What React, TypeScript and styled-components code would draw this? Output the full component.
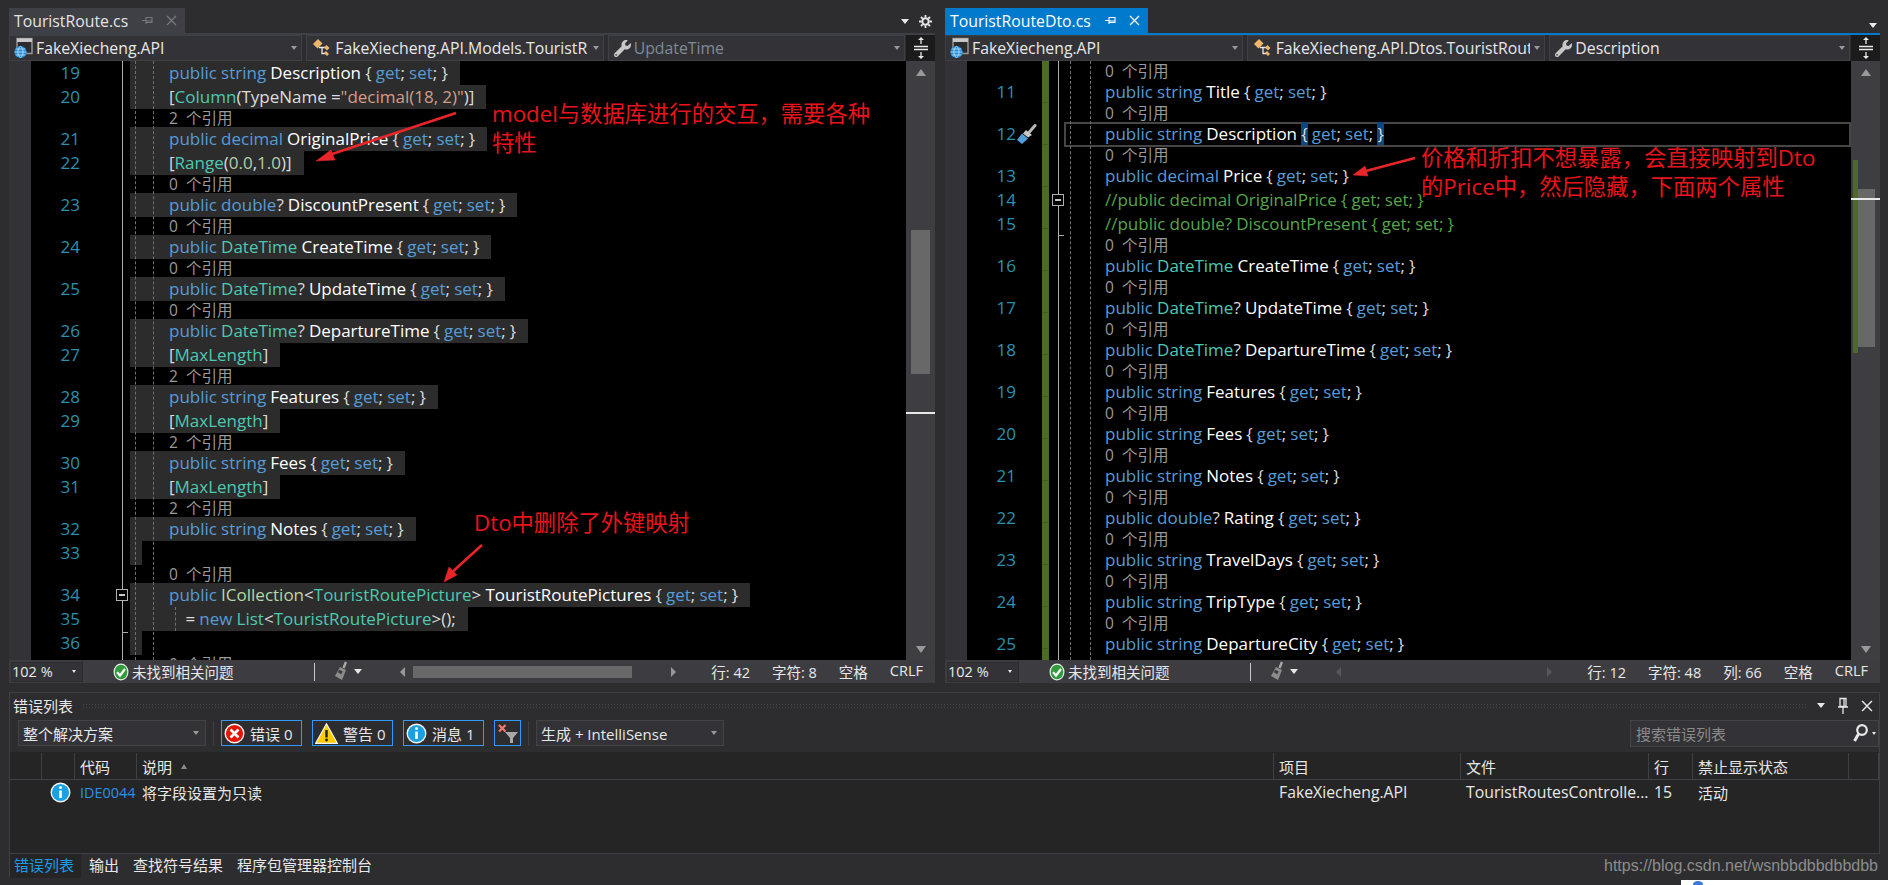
import React from 'react';
import styled, { createGlobalStyle } from 'styled-components';
import { FaWrench } from 'react-icons/fa';

const GlobalStyle = createGlobalStyle`
  html, body {
    margin: 0;
    padding: 0;
    background: #2d2d30;
  }
  * {
    box-sizing: border-box;
  }
`;

const FONT = `"Open Sans", "Noto Sans CJK SC", sans-serif`;

const Page = styled.div`
  position: relative;
  width: 1888px;
  height: 885px;
  overflow: hidden;
  background: #2d2d30;
  color: #e8e8e8;
  font-family: ${FONT};
  font-size: 15px;
`;

const Panes = styled.div`
  display: grid;
  grid-template-columns: 926px 935px;
  column-gap: 10px;
  padding-left: 9px;
`;

const Pane = styled.section`
  display: flex;
  flex-direction: column;
`;

const TabStrip = styled.div<{ $active?: boolean }>`
  display: flex;
  align-items: flex-end;
  height: 35px;
  border-bottom: 2px solid ${(p) => (p.$active ? '#007acc' : '#3f3f46')};
`;

const Tab = styled.div<{ $active?: boolean; $width: number }>`
  display: flex;
  align-items: center;
  width: ${(p) => p.$width}px;
  height: 25px;
  padding-left: 5px;
  background: ${(p) => (p.$active ? '#007acc' : '#3f3f46')};
  color: ${(p) => (p.$active ? '#ffffff' : '#e4e4e4')};
  font-size: 15.8px;
  white-space: nowrap;
`;

const TabActions = styled.div`
  display: flex;
  align-items: center;
  gap: 10px;
  margin-left: auto;
  margin-bottom: 5px;
  padding-right: 3px;
  color: #e8e8e8;
`;

const TabIcons = styled.span<{ $dim?: boolean }>`
  display: inline-flex;
  align-items: center;
  gap: 13px;
  margin-left: auto;
  color: ${(p) => (p.$dim ? '#77777c' : '#ffffff')};
  padding-right: 8px;
`;

const NavBar = styled.div`
  display: flex;
  height: 26px;
  background: #2d2d30;
`;

const NavDrop = styled.div<{ $width: number; $dim?: boolean }>`
  display: flex;
  align-items: center;
  width: ${(p) => p.$width}px;
  margin-right: 4px;
  padding: 0 4px 0 3px;
  background: #333337;
  border: 1px solid #3f3f46;
  color: ${(p) => (p.$dim ? '#7f8a96' : '#e8e8e8')};
  font-size: 15.8px;
  white-space: nowrap;
  overflow: hidden;
`;

const NavLabel = styled.span`
  flex: 1;
  margin-left: 3px;
  overflow: hidden;
`;

const Caret = styled.span`
  flex: none;
  width: 0;
  height: 0;
  border-left: 3.5px solid transparent;
  border-right: 3.5px solid transparent;
  border-top: 4px solid #999;
  margin-left: 4px;
`;

const SplitButton = styled.div`
  flex: none;
  display: flex;
  align-items: center;
  justify-content: center;
  width: 29px;
  margin-left: -3px;
  background: #1b1b1c;
`;

const Editor = styled.div`
  position: relative;
  display: flex;
  height: 599px;
  overflow: hidden;
  background: #000;
`;

const LeftMargin = styled.div`
  flex: none;
  width: 22px;
  background: #333337;
`;

const Lines = styled.div<{ $offset?: number }>`
  flex: 1;
  min-width: 0;
  padding-top: ${(p) => p.$offset ?? 0}px;
`;

const Row = styled.div<{ $lens?: boolean }>`
  display: flex;
  height: ${(p) => (p.$lens ? 18 : 24)}px;
  line-height: ${(p) => (p.$lens ? 18 : 24)}px;
  white-space: pre;
`;

const LineNumber = styled.div`
  flex: none;
  width: 49px;
  text-align: right;
  color: #2b91af;
  font-size: 17px;
`;

const Fold = styled.div<{ $width: number }>`
  flex: none;
  width: ${(p) => p.$width}px;
  display: flex;
  align-items: center;
`;

const CodeCell = styled.div<{ $current?: boolean }>`
  flex: 1;
  min-width: 0;
  height: ${(p) => (p.$current ? 25 : 24)}px;
  box-shadow: ${(p) => (p.$current ? 'inset 0 0 0 2px #464646' : 'none')};
`;

const Code = styled.div<{ $pad: number; $selected?: boolean }>`
  display: inline-block;
  vertical-align: top;
  height: 24px;
  padding-left: ${(p) => p.$pad}px;
  padding-right: ${(p) => (p.$selected ? 12 : 0)}px;
  background: ${(p) => (p.$selected ? '#2c2c2d' : 'transparent')};
  font-size: 17px;
  word-spacing: -0.3px;
  color: #dcdcdc;
`;

const EmptySelection = styled.div`
  width: 12px;
  height: 24px;
  background: #2c2c2d;
`;

const Lens = styled.div<{ $pad: number }>`
  padding-left: ${(p) => p.$pad}px;
  color: #9a9a9a;
  font-size: 15.5px;
`;

const TOKEN_COLORS: Record<string, string> = {
  k: '#569cd6',
  t: '#4ec9b0',
  i: '#b8d7a3',
  p: '#dcdcdc',
  w: '#ffffff',
  s: '#d69d85',
  n: '#b5cea8',
  c: '#57a64a',
  b: '#569cd6',
};

const Token = styled.span<{ $kind: string }>`
  color: ${(p) => TOKEN_COLORS[p.$kind]};
  ${(p) => (p.$kind === 'b' ? 'background: #0e4583; color: #dcdcdc;' : '')}
`;

const Rule = styled.div<{ $left: number; $dashed?: boolean; $from?: number; $size?: number; $color?: string }>`
  position: absolute;
  left: ${(p) => p.$left}px;
  top: ${(p) => p.$from ?? 0}px;
  ${(p) => (p.$size ? `height: ${p.$size}px;` : 'bottom: 0;')}
  width: 0;
  border-left: 1px ${(p) => (p.$dashed ? 'dashed' : 'solid')} ${(p) => p.$color ?? '#5c5c5c'};
`;

const GreenBar = styled.div`
  position: absolute;
  left: 97px;
  top: 0;
  bottom: 0;
  width: 7px;
  background: repeating-linear-gradient(
    to bottom,
    #4d6b22 0,
    #4d6b22 41px,
    #435e1e 41px,
    #435e1e 42px
  );
`;

const FoldBox = styled.div<{ $left: number; $top: number }>`
  position: absolute;
  left: ${(p) => p.$left}px;
  top: ${(p) => p.$top}px;
  width: 12px;
  height: 12px;
  background: #000;
  border: 1px solid #b0b0b0;
  &::after {
    content: '';
    position: absolute;
    left: 2px;
    right: 2px;
    top: 4px;
    height: 2px;
    background: #c8c8c8;
  }
`;

const FoldTick = styled.div<{ $left: number; $top: number }>`
  position: absolute;
  left: ${(p) => p.$left}px;
  top: ${(p) => p.$top}px;
  width: 6px;
  height: 1px;
  background: #aaa;
`;

const VScroll = styled.div`
  position: relative;
  flex: none;
  width: 29px;
  display: flex;
  flex-direction: column;
  align-items: center;
  background: #3e3e42;
`;

const ArrowBox = styled.div`
  flex: none;
  height: 22px;
  width: 100%;
  display: flex;
  align-items: center;
  justify-content: center;
`;

const ArrowUp = styled.span`
  width: 0;
  height: 0;
  border-left: 5px solid transparent;
  border-right: 5px solid transparent;
  border-bottom: 7px solid #999;
`;

const ArrowDown = styled(ArrowUp)`
  border-bottom: 0;
  border-top: 7px solid #999;
`;

const Thumb = styled.div<{ $top: number; $height: number }>`
  flex: none;
  width: 19px;
  height: ${(p) => p.$height}px;
  margin-top: ${(p) => p.$top}px;
  margin-bottom: auto;
  background: #686868;
`;

const ScrollMark = styled.div<{ $top: number }>`
  position: absolute;
  left: 0;
  right: 0;
  top: ${(p) => p.$top}px;
  height: 2px;
  background: #e8e8e8;
`;

const ScrollChange = styled.div`
  position: absolute;
  left: 2px;
  width: 5px;
  top: 99px;
  height: 193px;
  background: #4d6b22;
`;

const StatusBar = styled.div`
  display: flex;
  align-items: center;
  height: 23px;
  background: #3c3c41;
  white-space: nowrap;
  font-size: 14.5px;
`;

const ZoomDrop = styled.div`
  display: flex;
  align-items: center;
  justify-content: space-between;
  width: 72px;
  height: 20px;
  margin-left: 2px;
  padding: 0 6px 0 0;
  background: #333337;
  border: 1px solid #2d2d30;
`;

const SmallCaret = styled.span`
  width: 0;
  height: 0;
  border-left: 2.5px solid transparent;
  border-right: 2.5px solid transparent;
  border-top: 3px solid #e8e8e8;
`;

const Health = styled.div`
  display: flex;
  align-items: center;
  gap: 3px;
  margin-left: 30px;
  width: 201px;
`;

const Separator = styled.div`
  flex: none;
  width: 1px;
  height: 18px;
  background: #c8c8c8;
`;

const CleanButton = styled.div`
  display: flex;
  align-items: center;
  gap: 4px;
  margin-left: 18px;
  width: 67px;
`;

const WhiteCaret = styled.span`
  width: 0;
  height: 0;
  border-left: 4px solid transparent;
  border-right: 4px solid transparent;
  border-top: 5px solid #e8e8e8;
`;

const HScroll = styled.div<{ $width: number }>`
  flex: none;
  display: flex;
  align-items: center;
  width: ${(p) => p.$width}px;
  height: 12px;
`;

const HArrow = styled.span<{ $right?: boolean; $dim?: boolean }>`
  flex: none;
  width: 0;
  height: 0;
  border-top: 5.5px solid transparent;
  border-bottom: 5.5px solid transparent;
  ${(p) =>
    p.$right
      ? `border-left: 5px solid ${p.$dim ? '#55555a' : '#999'}; margin-left: auto;`
      : `border-right: 5px solid ${p.$dim ? '#55555a' : '#999'};`}
`;

const HThumb = styled.div`
  width: 219px;
  height: 12px;
  margin-left: 8px;
  background: #686868;
`;

const StatusRight = styled.div`
  display: flex;
  gap: 22px;
  margin-left: auto;
  padding-right: 12px;
`;

const Panel = styled.section`
  display: flex;
  flex-direction: column;
  height: 185px;
  margin: 9px 8px 0 9px;
  border-top: 1px solid #3f3f46;
  border-left: 1px solid #3f3f46;
  border-right: 1px solid #3f3f46;
`;

const PanelTitle = styled.div`
  display: flex;
  align-items: center;
  height: 25px;
  padding: 0 6px 0 3px;
`;

const Grip = styled.div`
  flex: 1;
  height: 6px;
  margin: 0 9px;
  background-image: radial-gradient(#46464a 1px, transparent 1px);
  background-size: 3px 3px;
`;

const PanelIcons = styled.div`
  display: flex;
  align-items: center;
  gap: 12px;
`;

const Toolbar = styled.div`
  display: flex;
  align-items: center;
  height: 34px;
  padding: 0 0 4px 8px;
`;

const Drop = styled.div<{ $width: number }>`
  display: flex;
  align-items: center;
  justify-content: space-between;
  width: ${(p) => p.$width}px;
  height: 26px;
  padding: 0 6px 0 4px;
  background: #333337;
  border: 1px solid #434346;
`;

const ToolSep = styled.div`
  width: 1px;
  height: 24px;
  margin: 0 7px;
  background: #3f3f46;
`;

const ToggleButton = styled.div<{ $width: number }>`
  display: flex;
  align-items: center;
  gap: 5px;
  width: ${(p) => p.$width}px;
  height: 26px;
  padding-left: 2px;
  border: 1px solid #3399ff;
  margin-right: 10px;
`;

const FilterButton = styled(ToggleButton)`
  margin-right: 0;
  justify-content: center;
  padding-left: 0;
`;

const SearchBox = styled.div`
  display: flex;
  align-items: center;
  width: 249px;
  height: 27px;
  margin-left: auto;
  padding-left: 5px;
  background: #333337;
  border: 1px solid #434346;
  color: #8a8a8a;
`;

const SearchButton = styled.div`
  display: flex;
  align-items: center;
  gap: 3px;
  margin-left: auto;
  height: 100%;
  padding: 0 2px 0 0;
`;

const TableArea = styled.div`
  flex: 1;
  min-height: 0;
  background: #252526;
`;

const TABLE_COLUMNS = '32px 33px 62px 1137px 187px 188px 44px 156px 1fr';

const TableHead = styled.div`
  display: grid;
  grid-template-columns: ${TABLE_COLUMNS};
  height: 27px;
  margin-top: 1px;
  border-bottom: 1px solid #3f3f46;
`;

const TableRow = styled.div`
  display: grid;
  grid-template-columns: ${TABLE_COLUMNS};
  height: 21px;
  margin-top: 1px;
`;

const HeadCell = styled.div`
  display: flex;
  align-items: center;
  gap: 9px;
  padding-left: 5px;
  border-right: 1px solid #3f3f46;
  white-space: nowrap;
`;

const SortMark = styled.span`
  width: 0;
  height: 0;
  border-left: 3.5px solid transparent;
  border-right: 3.5px solid transparent;
  border-bottom: 5px solid #8a8a8a;
`;

const Cell = styled.div<{ $link?: boolean; $latin?: boolean; $icon?: boolean }>`
  display: flex;
  align-items: center;
  padding-left: ${(p) => (p.$icon ? 8 : 5)}px;
  color: ${(p) => (p.$link ? '#2b91ea' : '#e8e8e8')};
  font-size: ${(p) => (p.$latin ? 15.8 : p.$link ? 14.4 : 15)}px;
  white-space: nowrap;
`;

const BottomTabs = styled.div`
  display: flex;
  align-items: flex-start;
  height: 24px;
  margin-right: -1px;
  border-top: 1px solid #3f3f46;
  background: #2d2d30;
`;

const BottomTab = styled.div<{ $active?: boolean }>`
  height: 24px;
  line-height: 22px;
  padding: 0 7px 0 ${(p) => (p.$active ? 4 : 7)}px;
  margin-right: ${(p) => (p.$active ? 1 : 0)}px;
  background: ${(p) => (p.$active ? '#252526' : 'transparent')};
  color: ${(p) => (p.$active ? '#1b9bf0' : '#e8e8e8')};
`;

const Watermark = styled.div`
  margin-left: auto;
  padding-right: 2px;
  line-height: 24px;
  font-family: 'Liberation Sans', sans-serif;
  font-size: 16px;
  color: #8c8c8c;
`;

const Note = styled.div<{ $left: number; $top: number }>`
  position: absolute;
  left: ${(p) => p.$left}px;
  top: ${(p) => p.$top}px;
  color: #e8141c;
  font-size: 22.3px;
  line-height: 29px;
  white-space: pre;
`;

const ArrowOverlay = styled.svg`
  position: absolute;
  left: 0;
  top: 0;
  pointer-events: none;
`;

const CornerWindow = styled.div`
  position: absolute;
  left: 1681px;
  top: 880px;
  width: 207px;
  height: 5px;
  background: #fff;
  &::after {
    content: '';
    position: absolute;
    left: 12px;
    top: 1px;
    width: 10px;
    height: 6px;
    border-radius: 50%;
    background: #3b78d8;
  }
`;

// icons ---------------------------------------------------------------------

const ProjectIcon = () => (
  <svg width="20" height="22" viewBox="0 0 20 22" style={{ flex: 'none' }}>
    <rect x="4" y="1.5" width="15" height="15" fill="#2d2d30" stroke="#9a9a9a" strokeWidth="1.4" />
    <rect x="4" y="1.5" width="15" height="3.5" fill="#c8c8c8" />
    <circle cx="7.5" cy="15" r="6" fill="#1e8fe0" />
    <path
      d="M1.5 15h12M7.5 9c-3.4 3.6-3.4 8.4 0 12M7.5 9c3.4 3.6 3.4 8.4 0 12M2.6 12h9.8M2.6 18h9.8"
      fill="none"
      stroke="#bfe3fb"
      strokeWidth="0.8"
    />
  </svg>
);

const NamespaceIcon = () => (
  <svg width="20" height="20" viewBox="0 0 20 20" style={{ flex: 'none', marginLeft: 2 }}>
    <path d="M1 6l5-5 4.5 4.5-5 5z" fill="#f0b76a" />
    <path d="M7 9.5h6M10 9.5v6h3" fill="none" stroke="#e8e8e8" strokeWidth="1.3" />
    <path d="M12 9.5l2.5-2.5 3 3-2.5 2.5zM12 15l2-2 3 3-2 2z" fill="#f0b76a" />
  </svg>
);

const SplitIcon = () => (
  <svg width="16" height="22" viewBox="0 0 16 22">
    <path d="M1 9.5h14M1 12.5h14M8 1v6M8 15v6" stroke="#e8e8e8" strokeWidth="1.3" fill="none" />
    <path d="M5 3l3-3 3 3zM5 19l3 3 3-3z" fill="#e8e8e8" />
  </svg>
);

const PinIcon = ({ color = '#fff' }: { color?: string }) => (
  <svg width="11" height="11" viewBox="0 0 11 11">
    <path d="M0 5.5h4M4 2v7M4 2.5h6v5H4M4 6h6" fill="none" stroke={color} strokeWidth="1.1" />
  </svg>
);

const VPinIcon = () => (
  <svg width="12" height="18" viewBox="0 0 12 18">
    <path d="M3 1.5h6v8H3zM7 1.5v8M1 10h10M6 10v7" fill="none" stroke="#e8e8e8" strokeWidth="1.3" />
  </svg>
);

const CloseIcon = ({ color = '#fff', size = 11 }: { color?: string; size?: number }) => (
  <svg width={size} height={size} viewBox="0 0 11 11">
    <path d="M1 1l9 9M10 1l-9 9" stroke={color} strokeWidth="1.3" fill="none" />
  </svg>
);

const GearIcon = () => (
  <svg width="13" height="13" viewBox="0 0 13 13">
    <circle cx="6.5" cy="6.5" r="3.2" fill="none" stroke="#e8e8e8" strokeWidth="2" />
    <path
      d="M6.5 0v2.5M6.5 10.5V13M0 6.5h2.5M10.5 6.5H13M2 2l1.7 1.7M9.3 9.3L11 11M11 2L9.3 3.7M3.7 9.3L2 11"
      stroke="#e8e8e8"
      strokeWidth="1.8"
    />
  </svg>
);

const OkIcon = () => (
  <svg width="16" height="18" viewBox="0 0 16 18" style={{ flex: 'none' }}>
    <ellipse cx="8" cy="9" rx="7.5" ry="8.5" fill="#e8efe8" />
    <ellipse cx="8" cy="9" rx="6.3" ry="7.3" fill="#339a3e" />
    <path d="M4 9.2l3 3.3 5-6.5" fill="none" stroke="#fff" strokeWidth="2.2" />
  </svg>
);

const BroomIcon = () => (
  <svg width="17" height="22" viewBox="0 0 17 22" style={{ flex: 'none' }}>
    <path d="M13 1l-2.5 6" stroke="#a8a8a8" strokeWidth="2.4" />
    <path d="M7 6l6 3-4 10-7-4z" fill="#8c8c8c" />
    <path d="M5.5 10l3.5 1.8" stroke="#3c3c41" strokeWidth="3" />
  </svg>
);

const BrushMark = () => (
  <svg width="21" height="22" viewBox="0 0 21 22">
    <path d="M19 2.5l-6 7" stroke="#b8b8b8" strokeWidth="3" strokeLinecap="round" />
    <path d="M10 7l6 5-4 2.5-5-4z" fill="#c8c8c8" />
    <path d="M6 10.5l6 5-6 5.5-5-4z" fill="#4f9fdc" />
  </svg>
);

const ErrorIcon = () => (
  <svg width="21" height="21" viewBox="0 0 21 21" style={{ flex: 'none' }}>
    <circle cx="10.5" cy="10.5" r="10" fill="#f4f4f4" />
    <circle cx="10.5" cy="10.5" r="8.6" fill="#e51400" />
    <path d="M6.5 6.5l8 8M14.5 6.5l-8 8" stroke="#fff" strokeWidth="2.6" />
  </svg>
);

const WarnIcon = () => (
  <svg width="23" height="21" viewBox="0 0 23 21" style={{ flex: 'none' }}>
    <path d="M11.5 .8L22.4 20.4H.6z" fill="#ffcc00" stroke="#f4f4f4" strokeWidth="1.2" />
    <path d="M11.5 7v7.5" stroke="#1e1e1e" strokeWidth="2.4" />
    <circle cx="11.5" cy="17" r="1.4" fill="#1e1e1e" />
  </svg>
);

const InfoIcon = () => (
  <svg width="21" height="21" viewBox="0 0 21 21" style={{ flex: 'none' }}>
    <circle cx="10.5" cy="10.5" r="10" fill="#f4f4f4" />
    <circle cx="10.5" cy="10.5" r="8.6" fill="#1ba1e2" />
    <path d="M10.5 8.5v7.5" stroke="#fff" strokeWidth="2.6" />
    <circle cx="10.5" cy="5.6" r="1.5" fill="#fff" />
  </svg>
);

const FilterIcon = () => (
  <svg width="24" height="22" viewBox="0 0 24 22">
    <path d="M3 3l6.5 6.5M9.5 3L3 9.5" stroke="#f0796a" strokeWidth="2.2" />
    <path d="M9 10h13l-5 6v5h-3v-5z" fill="#a8a8a8" />
  </svg>
);

const SearchIcon = () => (
  <svg width="18" height="20" viewBox="0 0 18 20">
    <circle cx="11" cy="7" r="4.8" fill="none" stroke="#e8e8e8" strokeWidth="2.2" />
    <path d="M7.5 11L3.5 18" stroke="#e8e8e8" strokeWidth="3" />
  </svg>
);

// code ----------------------------------------------------------------------

type Tok = [string, string];

interface Line {
  n?: number;
  toks?: Tok[];
  lens?: string;
}

const accessors: Tok[] = [
  ['p', '{ '],
  ['k', 'get'],
  ['p', '; '],
  ['k', 'set'],
  ['p', '; }'],
];

const prop = (type: Tok[], name: string): Tok[] => [
  ['k', 'public '],
  ...type,
  ['w', `${name} `],
  ...accessors,
];

const str: Tok[] = [['k', 'string ']];
const dec: Tok[] = [['k', 'decimal ']];
const dbl: Tok[] = [
  ['k', 'double'],
  ['p', '? '],
];
const date: Tok[] = [
  ['t', 'DateTime'],
  ['p', ' '],
];
const dateQ: Tok[] = [
  ['t', 'DateTime'],
  ['p', '? '],
];
const maxLength: Tok[] = [
  ['p', '['],
  ['t', 'MaxLength'],
  ['p', ']'],
];

const leftLines: Line[] = [
  { n: 19, toks: prop(str, 'Description') },
  {
    n: 20,
    toks: [
      ['p', '['],
      ['t', 'Column'],
      ['p', '(TypeName ='],
      ['s', '"decimal(18, 2)"'],
      ['p', ')]'],
    ],
  },
  { lens: '2' },
  { n: 21, toks: prop(dec, 'OriginalPrice') },
  {
    n: 22,
    toks: [
      ['p', '['],
      ['t', 'Range'],
      ['p', '('],
      ['n', '0.0'],
      ['p', ','],
      ['n', '1.0'],
      ['p', ')]'],
    ],
  },
  { lens: '0' },
  { n: 23, toks: prop(dbl, 'DiscountPresent') },
  { lens: '0' },
  { n: 24, toks: prop(date, 'CreateTime') },
  { lens: '0' },
  { n: 25, toks: prop(dateQ, 'UpdateTime') },
  { lens: '0' },
  { n: 26, toks: prop(dateQ, 'DepartureTime') },
  { n: 27, toks: maxLength },
  { lens: '2' },
  { n: 28, toks: prop(str, 'Features') },
  { n: 29, toks: maxLength },
  { lens: '2' },
  { n: 30, toks: prop(str, 'Fees') },
  { n: 31, toks: maxLength },
  { lens: '2' },
  { n: 32, toks: prop(str, 'Notes') },
  { n: 33, toks: [] },
  { lens: '0' },
  {
    n: 34,
    toks: [
      ['k', 'public '],
      ['i', 'ICollection'],
      ['p', '<'],
      ['t', 'TouristRoutePicture'],
      ['p', '> '],
      ['w', 'TouristRoutePictures '],
      ...accessors,
    ],
  },
  {
    n: 35,
    toks: [
      ['p', '    = '],
      ['k', 'new '],
      ['t', 'List'],
      ['p', '<'],
      ['t', 'TouristRoutePicture'],
      ['p', '>();'],
    ],
  },
  { n: 36, toks: [] },
  { lens: '0' },
];

const rightLines: Line[] = [
  { lens: '0' },
  { n: 11, toks: prop(str, 'Title') },
  { lens: '0' },
  {
    n: 12,
    toks: [
      ['k', 'public '],
      ['k', 'string '],
      ['w', 'Description '],
      ['b', '{'],
      ['p', ' '],
      ['k', 'get'],
      ['p', '; '],
      ['k', 'set'],
      ['p', '; '],
      ['b', '}'],
    ],
  },
  { lens: '0' },
  { n: 13, toks: prop(dec, 'Price') },
  { n: 14, toks: [['c', '//public decimal OriginalPrice { get; set; }']] },
  { n: 15, toks: [['c', '//public double? DiscountPresent { get; set; }']] },
  { lens: '0' },
  { n: 16, toks: prop(date, 'CreateTime') },
  { lens: '0' },
  { n: 17, toks: prop(dateQ, 'UpdateTime') },
  { lens: '0' },
  { n: 18, toks: prop(dateQ, 'DepartureTime') },
  { lens: '0' },
  { n: 19, toks: prop(str, 'Features') },
  { lens: '0' },
  { n: 20, toks: prop(str, 'Fees') },
  { lens: '0' },
  { n: 21, toks: prop(str, 'Notes') },
  { lens: '0' },
  { n: 22, toks: prop(dbl, 'Rating') },
  { lens: '0' },
  { n: 23, toks: prop(str, 'TravelDays') },
  { lens: '0' },
  { n: 24, toks: prop(str, 'TripType') },
  { lens: '0' },
  { n: 25, toks: prop(str, 'DepartureCity') },
];

interface CodeLinesProps {
  lines: Line[];
  foldWidth: number;
  pad: number;
  selected?: boolean;
  currentLine?: number;
}

const CodeLines: React.FC<CodeLinesProps> = ({ lines, foldWidth, pad, selected, currentLine }) => (
  <>
    {lines.map((line, i) =>
      line.lens ? (
        <Row key={i} $lens>
          <LineNumber />
          <Fold $width={foldWidth} />
          <Lens $pad={pad}>{`${line.lens}  个引用`}</Lens>
        </Row>
      ) : (
        <Row key={i}>
          <LineNumber>{line.n}</LineNumber>
          <Fold $width={foldWidth}>{line.n === currentLine && <BrushMark />}</Fold>
          <CodeCell $current={line.n === currentLine}>
            {line.toks?.length ? (
              <Code $pad={pad} $selected={selected}>
                {line.toks.map(([kind, text], j) => (
                  <Token key={j} $kind={kind}>
                    {text}
                  </Token>
                ))}
              </Code>
            ) : (
              <EmptySelection />
            )}
          </CodeCell>
        </Row>
      ),
    )}
  </>
);

const columns = ['', '', '代码', '说明', '项目', '文件', '行', '禁止显示状态', ''];

const App: React.FC = () => (
  <Page>
    <GlobalStyle />
    <Panes>
      <Pane>
        <TabStrip>
          <Tab $width={176}>
            TouristRoute.cs
            <TabIcons $dim>
              <PinIcon color="#77777c" />
              <CloseIcon color="#77777c" />
            </TabIcons>
          </Tab>
          <TabActions>
            <WhiteCaret />
            <GearIcon />
          </TabActions>
        </TabStrip>
        <NavBar>
          <NavDrop $width={296}>
            <ProjectIcon />
            <NavLabel>FakeXiecheng.API</NavLabel>
            <Caret />
          </NavDrop>
          <NavDrop $width={300}>
            <NamespaceIcon />
            <NavLabel>FakeXiecheng.API.Models.TouristR</NavLabel>
            <Caret />
          </NavDrop>
          <NavDrop $width={300} $dim>
            <FaWrench size={17} color="#c8c8c8" style={{ flex: 'none', marginLeft: 2 }} />
            <NavLabel>UpdateTime</NavLabel>
            <Caret />
          </NavDrop>
          <SplitButton>
            <SplitIcon />
          </SplitButton>
        </NavBar>
        <Editor>
          <LeftMargin />
          <Lines>
            <CodeLines lines={leftLines} foldWidth={50} pad={39} selected />
          </Lines>
          <Rule $left={113} $color="#b0b0b0" />
          <Rule $left={126} $dashed $color="#707070" />
          <Rule $left={144} $dashed $color="#707070" />
          <Rule $left={166} $dashed $from={546} $size={24} $color="#707070" />
          <FoldBox $left={107} $top={528} />
          <FoldTick $left={113} $top={571} />
          <VScroll>
            <ArrowBox>
              <ArrowUp />
            </ArrowBox>
            <Thumb $top={147} $height={144} />
            <ScrollMark $top={351} />
            <ArrowBox>
              <ArrowDown />
            </ArrowBox>
          </VScroll>
        </Editor>
        <StatusBar>
          <ZoomDrop>
            102 %
            <SmallCaret />
          </ZoomDrop>
          <Health>
            <OkIcon />
            未找到相关问题
          </Health>
          <Separator />
          <CleanButton>
            <BroomIcon />
            <WhiteCaret />
          </CleanButton>
          <HScroll $width={276}>
            <HArrow />
            <HThumb />
            <HArrow $right />
          </HScroll>
          <StatusRight>
            <span>行: 42</span>
            <span>字符: 8</span>
            <span>空格</span>
            <span>CRLF</span>
          </StatusRight>
        </StatusBar>
      </Pane>

      <Pane>
        <TabStrip $active>
          <Tab $width={203} $active>
            TouristRouteDto.cs
            <TabIcons>
              <PinIcon />
              <CloseIcon />
            </TabIcons>
          </Tab>
          <TabActions>
            <WhiteCaret />
          </TabActions>
        </TabStrip>
        <NavBar>
          <NavDrop $width={299}>
            <ProjectIcon />
            <NavLabel>FakeXiecheng.API</NavLabel>
            <Caret />
          </NavDrop>
          <NavDrop $width={300}>
            <NamespaceIcon />
            <NavLabel>FakeXiecheng.API.Dtos.TouristRout</NavLabel>
            <Caret />
          </NavDrop>
          <NavDrop $width={302}>
            <FaWrench size={17} color="#c8c8c8" style={{ flex: 'none', marginLeft: 2 }} />
            <NavLabel>Description</NavLabel>
            <Caret />
          </NavDrop>
          <SplitButton>
            <SplitIcon />
          </SplitButton>
        </NavBar>
        <Editor>
          <LeftMargin />
          <Lines $offset={1}>
            <CodeLines lines={rightLines} foldWidth={48} pad={41} currentLine={12} />
          </Lines>
          <GreenBar />
          <Rule $left={113} $color="#b0b0b0" />
          <Rule $left={125} $dashed $color="#707070" />
          <Rule $left={145} $dashed $color="#707070" />
          <FoldBox $left={107} $top={133} />
          <FoldTick $left={113} $top={174} />
          <VScroll>
            <ArrowBox>
              <ArrowUp />
            </ArrowBox>
            <Thumb $top={106} $height={158} />
            <ScrollChange />
            <ScrollMark $top={137} />
            <ArrowBox>
              <ArrowDown />
            </ArrowBox>
          </VScroll>
        </Editor>
        <StatusBar>
          <ZoomDrop>
            102 %
            <SmallCaret />
          </ZoomDrop>
          <Health>
            <OkIcon />
            未找到相关问题
          </Health>
          <Separator />
          <CleanButton>
            <BroomIcon />
            <WhiteCaret />
          </CleanButton>
          <HScroll $width={216}>
            <HArrow $dim />
            <HArrow $right $dim />
          </HScroll>
          <StatusRight>
            <span>行: 12</span>
            <span>字符: 48</span>
            <span>列: 66</span>
            <span>空格</span>
            <span>CRLF</span>
          </StatusRight>
        </StatusBar>
      </Pane>
    </Panes>

    <Panel>
      <PanelTitle>
        错误列表
        <Grip />
        <PanelIcons>
          <WhiteCaret />
          <VPinIcon />
          <CloseIcon color="#e8e8e8" size={12} />
        </PanelIcons>
      </PanelTitle>
      <Toolbar>
        <Drop $width={188}>
          整个解决方案
          <Caret />
        </Drop>
        <ToolSep />
        <ToggleButton $width={81}>
          <ErrorIcon />
          错误 0
        </ToggleButton>
        <ToggleButton $width={81}>
          <WarnIcon />
          警告 0
        </ToggleButton>
        <ToggleButton $width={81}>
          <InfoIcon />
          消息 1
        </ToggleButton>
        <FilterButton $width={27}>
          <FilterIcon />
        </FilterButton>
        <ToolSep />
        <Drop $width={188}>
          生成 + IntelliSense
          <Caret />
        </Drop>
        <SearchBox>
          搜索错误列表
          <SearchButton>
            <SearchIcon />
            <SmallCaret />
          </SearchButton>
        </SearchBox>
      </Toolbar>
      <TableArea>
        <TableHead>
          {columns.map((c, i) => (
            <HeadCell key={i}>
              {c}
              {c === '说明' && <SortMark />}
            </HeadCell>
          ))}
        </TableHead>
        <TableRow>
          <Cell />
          <Cell $icon>
            <InfoIcon />
          </Cell>
          <Cell $link>IDE0044</Cell>
          <Cell>将字段设置为只读</Cell>
          <Cell $latin>FakeXiecheng.API</Cell>
          <Cell $latin>TouristRoutesControlle...</Cell>
          <Cell $latin>15</Cell>
          <Cell>活动</Cell>
          <Cell />
        </TableRow>
      </TableArea>
      <BottomTabs>
        <BottomTab $active>错误列表</BottomTab>
        <BottomTab>输出</BottomTab>
        <BottomTab>查找符号结果</BottomTab>
        <BottomTab>程序包管理器控制台</BottomTab>
        <Watermark>https://blog.csdn.net/wsnbbdbbdbbdbb</Watermark>
      </BottomTabs>
    </Panel>

    <Note $left={492} $top={99}>{`model与数据库进行的交互，需要各种\n特性`}</Note>
    <Note $left={1421} $top={143}>{`价格和折扣不想暴露，会直接映射到Dto\n的Price中，然后隐藏，下面两个属性`}</Note>
    <Note $left={474} $top={508}>Dto中删除了外键映射</Note>

    <ArrowOverlay width="1888" height="885" viewBox="0 0 1888 885">
      <g stroke="#e8262a" strokeWidth="2.6" fill="#e8262a">
        <path d="M456 113L326 156" />
        <path d="M316 161l15-11 4 10z" strokeWidth="0.5" />
        <path d="M482 545L450 574" />
        <path d="M444 582l5-15 8 8z" strokeWidth="0.5" />
        <path d="M1415 158L1362 172" />
        <path d="M1353 175l12-9 3 10z" strokeWidth="0.5" />
      </g>
    </ArrowOverlay>
    <CornerWindow />
  </Page>
);

export default App;
